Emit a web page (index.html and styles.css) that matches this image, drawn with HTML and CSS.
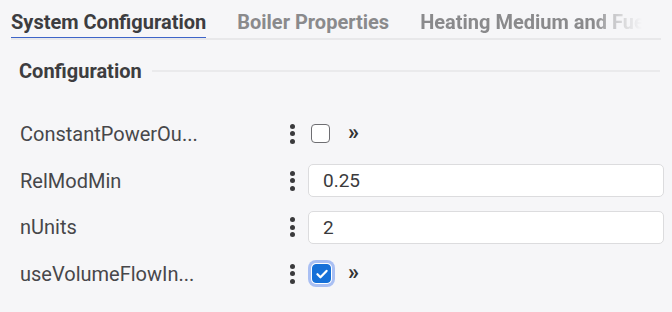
FILE: index.html
```html
<!DOCTYPE html>
<html lang="en">
<head>
  <meta charset="UTF-8">
  <title>System Configuration</title>
  <link rel="stylesheet" href="styles.css">
</head>
<body>
  <div class="panel">
    <div class="tabs">
      <span class="tab active">System Configuration</span>
      <span class="tab">Boiler Properties</span>
      <span class="tab">Heating Medium and Fuel</span>
    </div>
    <div class="group-title">Configuration</div>
    <div class="rows">
      <div class="row">
        <span class="label">ConstantPowerOu...</span>
        <span class="kebab"><i></i><i></i><i></i></span>
        <div class="control">
          <span class="check"></span>
          <span class="more">&raquo;</span>
        </div>
      </div>
      <div class="row">
        <span class="label">RelModMin</span>
        <span class="kebab"><i></i><i></i><i></i></span>
        <div class="control">
          <input class="field" type="text" value="0.25">
        </div>
      </div>
      <div class="row">
        <span class="label">nUnits</span>
        <span class="kebab"><i></i><i></i><i></i></span>
        <div class="control">
          <input class="field" type="text" value="2">
        </div>
      </div>
      <div class="row">
        <span class="label">useVolumeFlowIn...</span>
        <span class="kebab"><i></i><i></i><i></i></span>
        <div class="control">
          <span class="check checked focus">
            <svg viewBox="0 0 16 16" width="14" height="14"><path d="M2.8 8.3l3.4 3.4 7-7.2" fill="none" stroke="#fff" stroke-width="2.6" stroke-linecap="round" stroke-linejoin="round"/></svg>
          </span>
          <span class="more">&raquo;</span>
        </div>
      </div>
    </div>
  </div>
</body>
</html>
```

FILE: styles.css
```css
html, body {
  margin: 0;
  padding: 0;
  background: #f6f6f8;
  color: #444;
  font-family: Roboto, "Open Sans", sans-serif;
}
.panel {
  width: 672px;
  height: 312px;
  padding: 7px 12px 0 11px;
  box-sizing: border-box;
}
.tabs {
  display: flex;
  gap: 31px;
  border-bottom: 2px solid #e8e8ea;
  white-space: nowrap;
  overflow: hidden;
  width: 650px;
}
.tab {
  font-size: 20px;
  font-weight: 700;
  color: #8a8a8c;
  padding: 3px 0 3px;
  margin-bottom: -2px;
  border-bottom: 3px solid transparent;
}
.tab:last-child {
  -webkit-mask-image: linear-gradient(to right, #000 175px, rgba(0,0,0,.4) 195px, transparent 222px);
  mask-image: linear-gradient(to right, #000 175px, rgba(0,0,0,.4) 195px, transparent 222px);
}
.tab.active {
  color: #3d3d40;
  border-bottom-color: #3d64c8;
}
.group-title {
  display: flex;
  align-items: center;
  gap: 10px;
  margin: 19px 0 0 8px;
  font-size: 20px;
  font-weight: 700;
  color: #3d3d40;
}
.group-title::after {
  content: "";
  flex: 1;
  height: 2px;
  background: #eaeaec;
}
.rows {
  margin-top: 27.5px;
  padding-left: 9px;
}
.row {
  display: grid;
  grid-template-columns: 262px 26px 1fr;
  align-items: center;
  height: 46.7px;
}
.label {
  font-size: 20px;
  color: #47474a;
}
.kebab {
  display: flex;
  flex-direction: column;
  align-items: center;
  gap: 2.5px;
  width: 20px;
}
.kebab i {
  width: 5px;
  height: 5px;
  border-radius: 50%;
  background: #3a3a3c;
}
.control {
  display: flex;
  align-items: center;
}
.check {
  display: flex;
  align-items: center;
  justify-content: center;
  width: 19px;
  height: 19px;
  box-sizing: border-box;
  margin-left: 3px;
  border: 1.5px solid #6e6e72;
  border-radius: 4px;
  background: #fff;
}
.check.checked {
  background: #1670d8;
  border-color: #1670d8;
  margin-left: 4px;
}
.check.focus {
  box-shadow: 0 0 0 1px #fff, 0 0 0 4px #a9bff3;
}
.more {
  margin-left: 18px;
  font-size: 22px;
  font-weight: 700;
  color: #333;
  line-height: 1;
  margin-top: -4px;
}
.check.checked + .more {
  margin-left: 17px;
}
.field {
  width: 356px;
  height: 33px;
  box-sizing: border-box;
  border: 1.5px solid #dcdcde;
  border-radius: 5px;
  background: #fff;
  padding: 0 14px;
  font-family: inherit;
  font-size: 19px;
  color: #3a3a3c;
}
```
